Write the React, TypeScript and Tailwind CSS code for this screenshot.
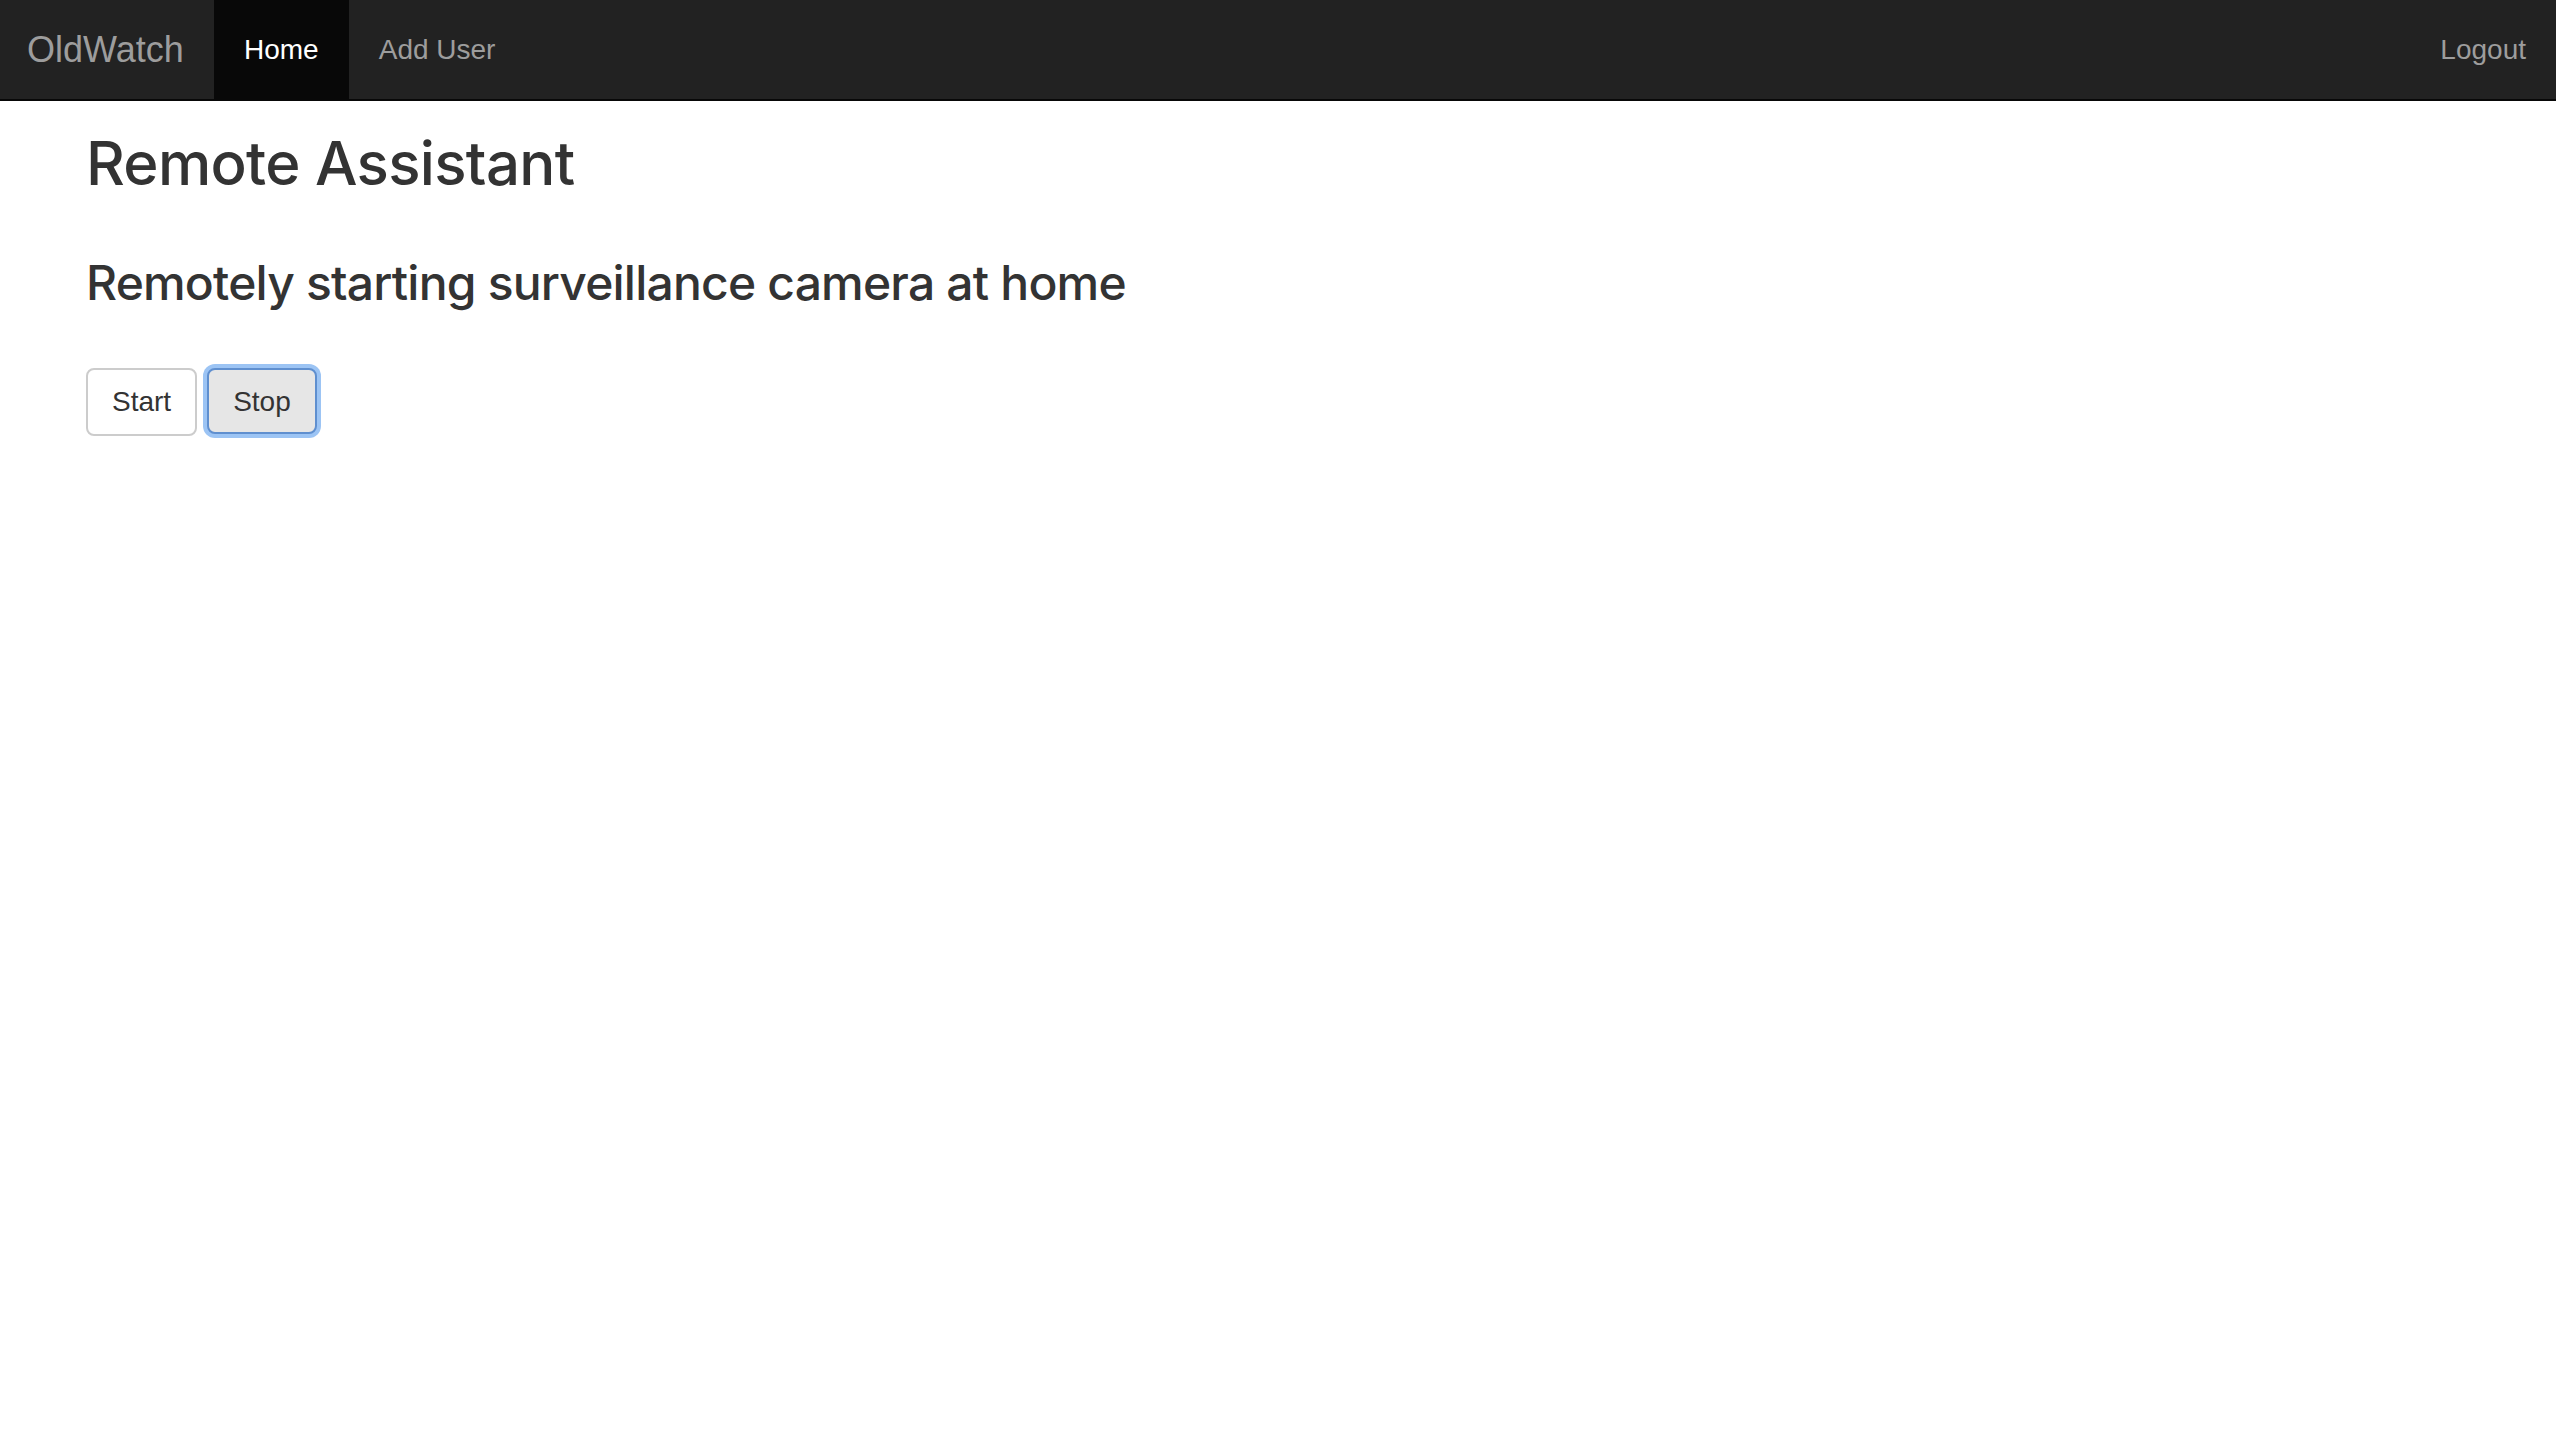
import React from 'react';

const font = { fontFamily: '"Liberation Sans", Arial, Helvetica, sans-serif' };
const headingFont = { fontFamily: 'Inter, "Liberation Sans", Arial, sans-serif' };

const NavBar: React.FC = () => {
  return (
    <nav className="flex h-[101px] items-stretch justify-between border-b-2 border-[#080808] bg-[#222222]">
      <div className="flex items-stretch">
        <a className="flex w-[214px] items-center pl-[27px] text-[36px] leading-[40px] text-[#9d9d9d]">
          OldWatch
        </a>
        <a className="flex items-center bg-[#080808] px-[30px] text-[28px] leading-[40px] text-white">
          Home
        </a>
        <a className="flex items-center px-[30px] text-[28px] leading-[40px] text-[#9d9d9d]">
          Add User
        </a>
      </div>
      <a className="flex items-center px-[30px] text-[28px] leading-[40px] text-[#9d9d9d]">
        Logout
      </a>
    </nav>
  );
};

export default function App() {
  return (
    <div className="min-h-screen bg-white text-[#333333]" style={font}>
      <NavBar />
      <main className="px-[86px] pt-[29px]">
        <h2 className="text-[60px] leading-[66px] font-medium tracking-[-0.7px]" style={headingFont}>
          Remote Assistant
        </h2>
        <h3 className="mt-[60px] text-[48px] leading-[53px] font-medium tracking-[-0.8px]" style={headingFont}>
          Remotely starting surveillance camera at home
        </h3>
        <div className="mt-[59px] flex gap-[10px]">
          <button
            type="button"
            className="h-[68px] rounded-[8px] border-2 border-[#cccccc] bg-white px-[24px] text-[28px] text-[#333333]"
          >
            Start
          </button>
          <button
            type="button"
            className="h-[66px] rounded-[8px] border-2 border-[#5f8fcf] bg-[#e6e6e6] px-[24px] pt-[2px] text-[28px] text-[#333333] shadow-[0_0_0_4px_#9cc4f4]"
          >
            Stop
          </button>
        </div>
      </main>
    </div>
  );
}
